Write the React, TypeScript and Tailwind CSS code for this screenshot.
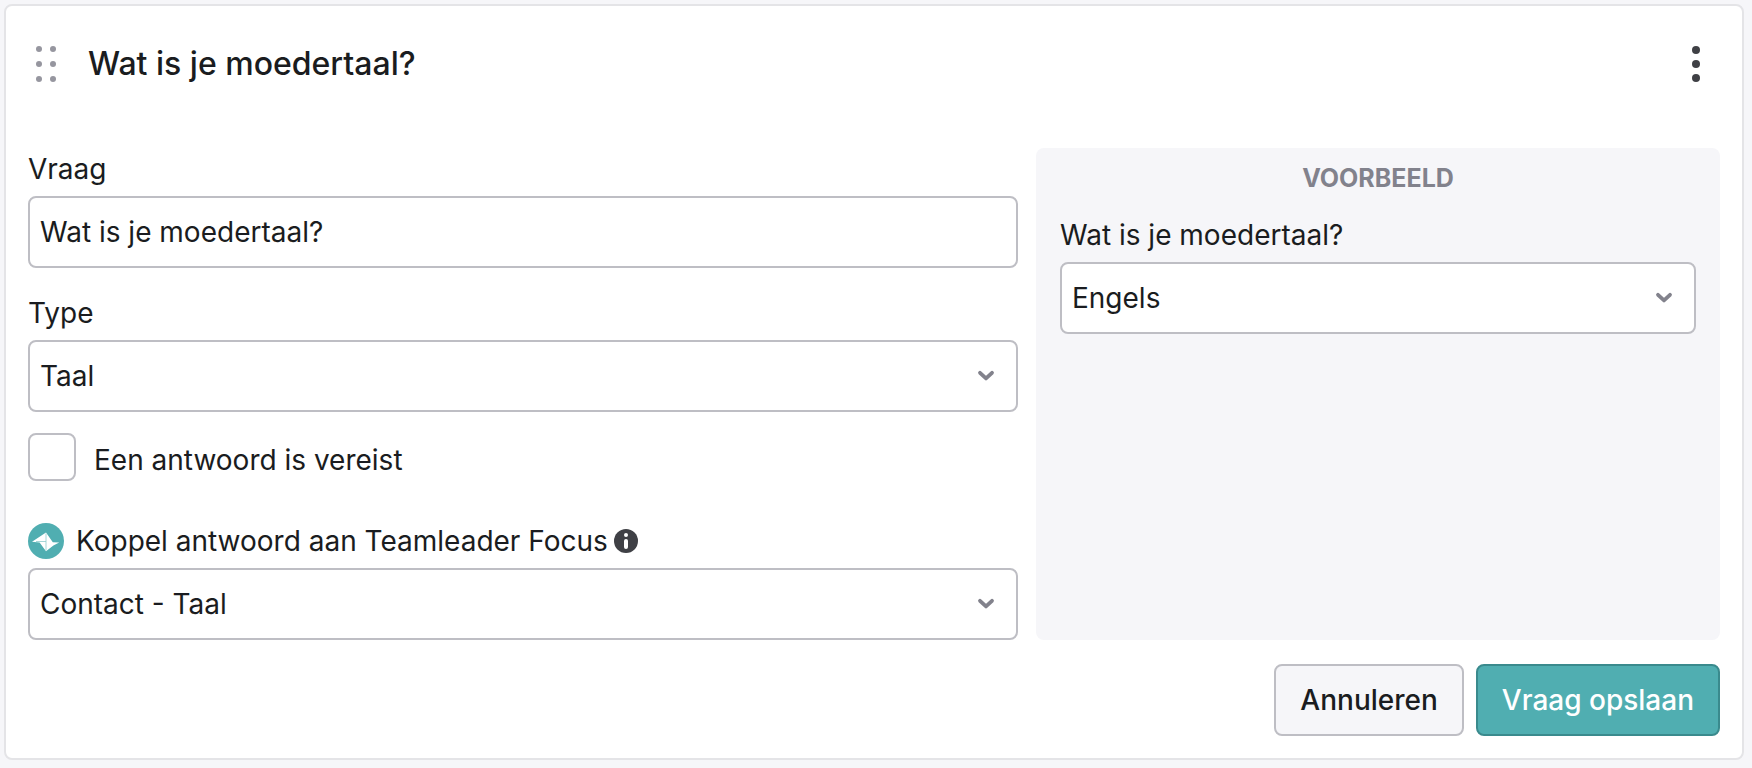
import { useId, useState, type ReactNode } from "react";

const fieldBox =
  "block h-[72px] w-full rounded-lg border-2 border-[#bebec4] bg-white pl-[10px] text-[28px] leading-10 text-[#1a1c20] outline-none focus:border-[#50aeb1]";

function Chevron() {
  return (
    <svg
      className="pointer-events-none absolute top-1/2 right-[22px] -mt-[6px] h-3 w-5"
      viewBox="0 0 20 12"
      fill="none"
      stroke="#82828c"
      strokeWidth="3.8"
      strokeLinecap="round"
      strokeLinejoin="round"
      aria-hidden="true"
    >
      <path d="M4 2.8l6 5.6 6-5.6" />
    </svg>
  );
}

function SelectField({
  label,
  before,
  after,
  options,
}: {
  label: string;
  before?: ReactNode;
  after?: ReactNode;
  options: string[];
}) {
  const id = useId();
  return (
    <div>
      <div className="mb-1.5 flex items-center">
        {before}
        <label htmlFor={id} className="text-[28px] leading-[42px]">
          {label}
        </label>
        {after}
      </div>
      <div className="relative">
        <select id={id} className={`${fieldBox} appearance-none pr-14`}>
          {options.map((option) => (
            <option key={option}>{option}</option>
          ))}
        </select>
        <Chevron />
      </div>
    </div>
  );
}

function DragHandle() {
  return (
    <svg className="h-9 w-5 shrink-0" viewBox="0 0 20 36" fill="#96969f" aria-hidden="true">
      {[3, 18, 33].map((y) => (
        <g key={y}>
          <circle cx="3" cy={y} r="3" />
          <circle cx="17" cy={y} r="3" />
        </g>
      ))}
    </svg>
  );
}

function KebabIcon() {
  return (
    <svg className="h-9 w-2" viewBox="0 0 8 36" fill="#3f4045" aria-hidden="true">
      <circle cx="4" cy="4" r="4" />
      <circle cx="4" cy="18" r="4" />
      <circle cx="4" cy="32" r="4" />
    </svg>
  );
}

function FocusLogo() {
  return (
    <svg className="mr-3 size-9 shrink-0" viewBox="0 0 36 36" aria-hidden="true">
      <circle cx="18" cy="18" r="18" fill="#50aeb1" />
      <path d="M4 18.7L18 9.4L24.8 19.2L31.2 19.4L25.4 22.6L18 28.2L11.6 19.4Z" fill="#fff" />
      <path d="M8 18.5H18M18 10.5V27.5" stroke="#8fcbcd" strokeWidth="0.8" fill="none" />
    </svg>
  );
}

function InfoIcon() {
  return (
    <svg className="size-6" viewBox="0 0 24 24" aria-hidden="true">
      <circle cx="12" cy="12" r="12" fill="#3f4045" />
      <circle cx="12" cy="6" r="2" fill="#fff" />
      <rect x="10" y="10" width="4" height="10" rx="2" fill="#fff" />
    </svg>
  );
}

export default function App() {
  const questionId = useId();
  const [question, setQuestion] = useState("Wat is je moedertaal?");

  return (
    <div className="min-h-screen bg-[#f6f6f9] py-1 pr-2 pl-1 font-['Inter',sans-serif] text-[#1a1c20]">
      <form
        className="rounded-lg border-2 border-[#e4e4e7] bg-white px-[22px] pb-[22px]"
        onSubmit={(event) => event.preventDefault()}
      >
        <header className="mb-16 flex items-center pt-[38px] pr-5 pl-2">
          <DragHandle />
          <h2 className="ml-8 flex-1 text-[32px] leading-10 font-medium">{question}</h2>
          <button type="button" aria-label="Meer opties">
            <KebabIcon />
          </button>
        </header>

        <div className="grid grid-cols-[55fr_38fr] gap-[18px]">
          <div>
            <div className="mb-6">
              <label htmlFor={questionId} className="mb-1.5 block text-[28px] leading-[42px]">
                Vraag
              </label>
              <input
                id={questionId}
                type="text"
                value={question}
                onChange={(event) => setQuestion(event.target.value)}
                className={fieldBox}
              />
            </div>

            <SelectField label="Type" options={["Taal", "Tekst", "Datum"]} />

            <label className="mt-[21px] mb-[39px] flex h-12 items-center gap-[18px]">
              <input
                type="checkbox"
                className="size-12 shrink-0 appearance-none rounded-lg border-2 border-[#bebec4] bg-white checked:bg-[#50aeb1]"
              />
              <span className="pt-1.5 text-[28px] leading-10">Een antwoord is vereist</span>
            </label>

            <SelectField
              label="Koppel antwoord aan Teamleader Focus"
              before={<FocusLogo />}
              after={
                <button type="button" aria-label="Meer informatie" className="ml-1.5">
                  <InfoIcon />
                </button>
              }
              options={["Contact - Taal", "Bedrijf - Taal"]}
            />
          </div>

          <section className="rounded-lg bg-[#f6f6f9] px-6 pt-2.5">
            <h3 className="mb-4 text-center text-[25px] leading-10 font-bold text-[#82828c] uppercase">
              Voorbeeld
            </h3>
            <SelectField label={question} options={["Engels", "Nederlands", "Frans"]} />
          </section>
        </div>

        <footer className="mt-6 flex justify-end gap-3">
          <button
            type="button"
            className="h-[72px] rounded-lg border-2 border-[#bebec4] bg-[#f6f6f9] px-6 text-[28px] leading-10 font-medium"
          >
            Annuleren
          </button>
          <button
            type="submit"
            className="h-[72px] rounded-lg border-2 border-[#3a8a8d] bg-[#50aeb1] px-6 text-[28px] leading-10 font-medium text-white"
          >
            Vraag opslaan
          </button>
        </footer>
      </form>
    </div>
  );
}
